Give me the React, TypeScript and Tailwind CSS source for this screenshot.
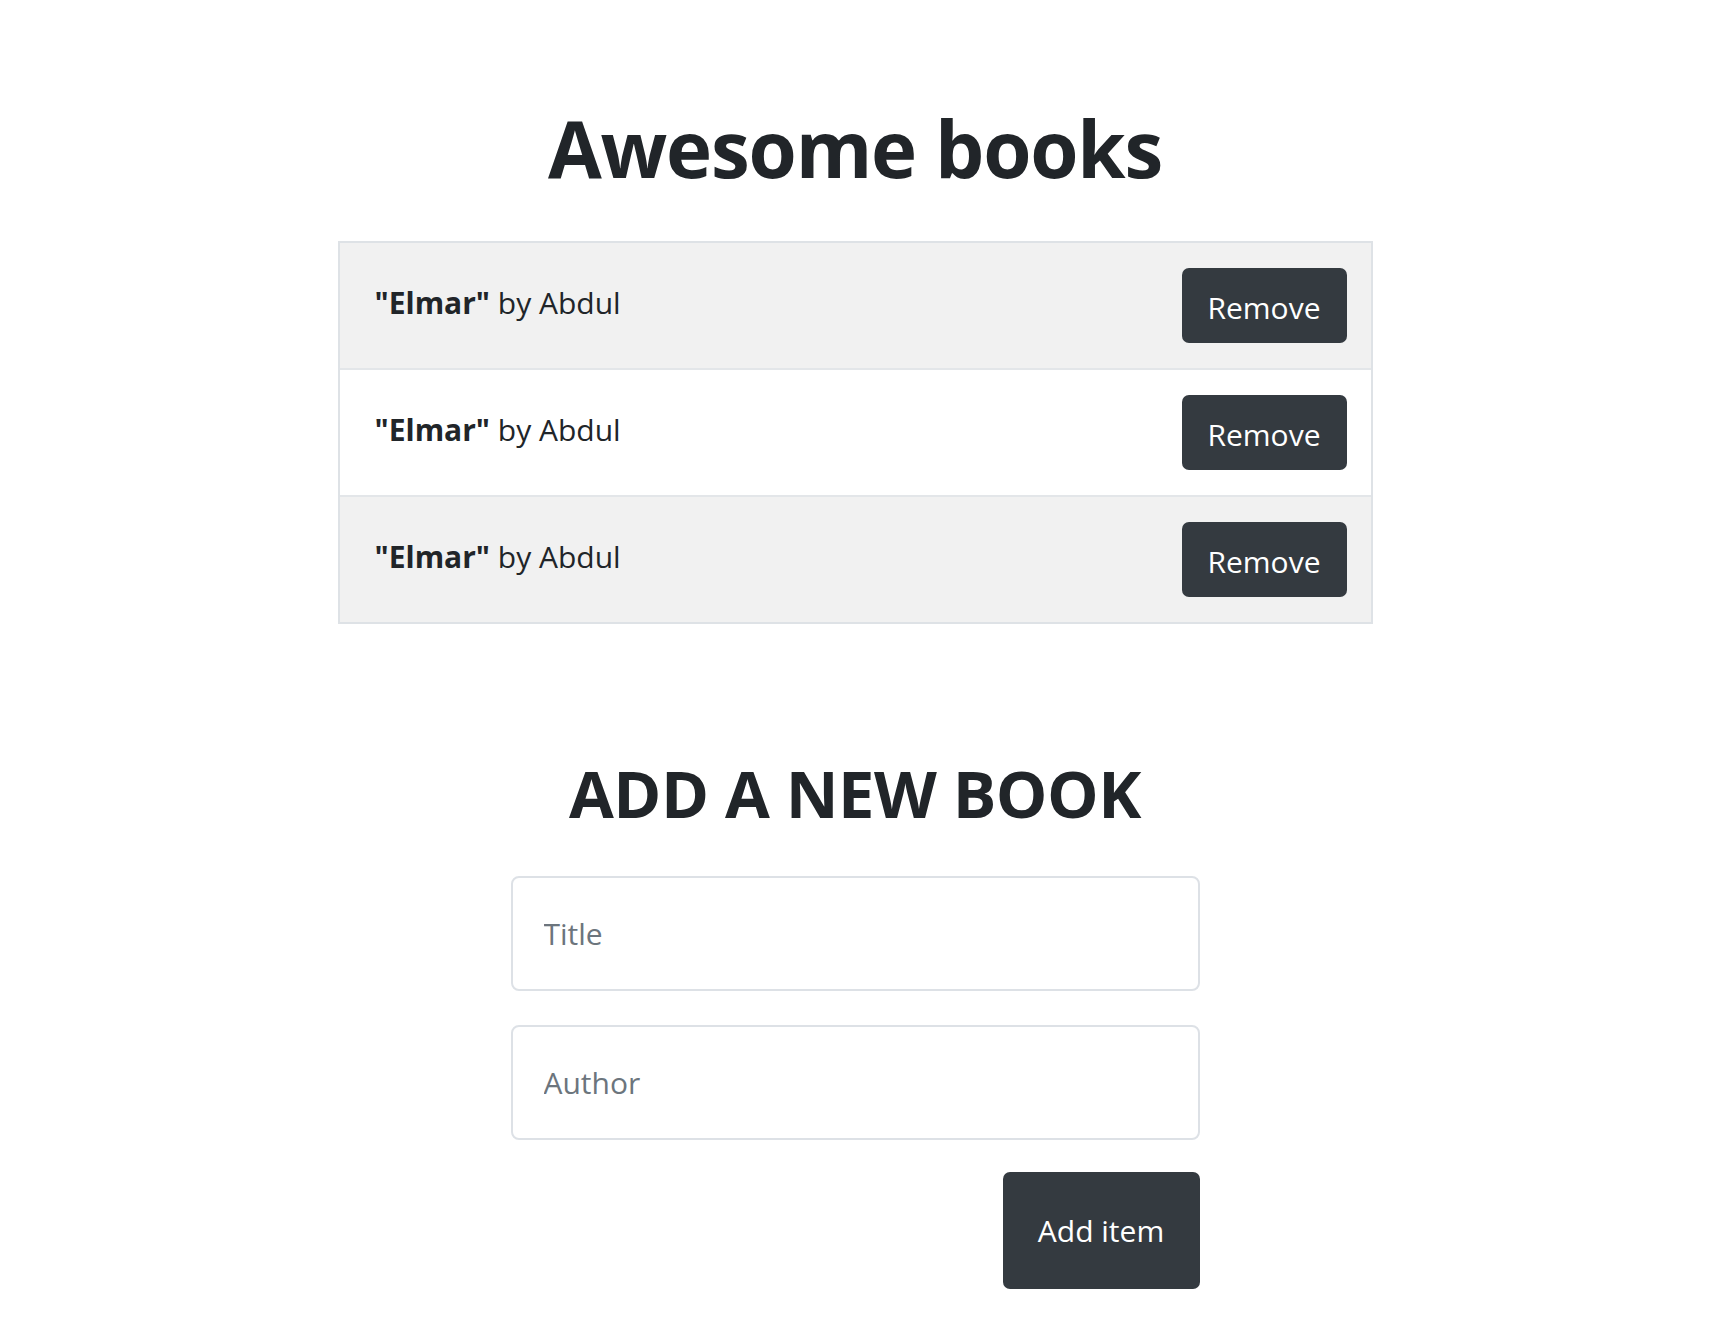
import { useState } from 'react';

type Book = {
  id: number;
  title: string;
  author: string;
};

const initialBooks: Book[] = [
  { id: 1, title: 'Elmar', author: 'Abdul' },
  { id: 2, title: 'Elmar', author: 'Abdul' },
  { id: 3, title: 'Elmar', author: 'Abdul' },
];

export default function App() {
  const [books, setBooks] = useState<Book[]>(initialBooks);
  const [title, setTitle] = useState('');
  const [author, setAuthor] = useState('');

  const removeBook = (id: number) => {
    setBooks((prev) => prev.filter((book) => book.id !== id));
  };

  const addBook = (e: React.FormEvent) => {
    e.preventDefault();
    if (!title.trim() || !author.trim()) return;
    setBooks((prev) => [...prev, { id: Date.now(), title, author }]);
    setTitle('');
    setAuthor('');
  };

  return (
    <div className="min-h-screen bg-white font-['Open_Sans',sans-serif] text-[#212529]">
      <h1 className="pt-[102px] text-center text-[78px] font-bold leading-[1.2] tracking-[-1.2px]">
        Awesome books
      </h1>

      <ul className="mx-auto mt-[45px] w-[1035px] border-2 border-[#dee2e6]">
        {books.map((book, index) => (
          <li
            key={book.id}
            className={`flex items-start justify-between py-[25px] pl-[35px] pr-6 ${
              index % 2 === 0 ? 'bg-[#f1f1f1]' : 'bg-white'
            } ${index < books.length - 1 ? 'border-b-2 border-[#e3e6e9]' : ''}`}
          >
            <p className="mt-[12px] text-[30px] leading-[1.5]">
              <span className="font-bold">"{book.title}"</span> by {book.author}
            </p>
            <button
              type="button"
              onClick={() => removeBook(book.id)}
              className="h-[75px] w-[165px] rounded-[7px] bg-[#343a40] pt-[5px] text-[30px] text-white"
            >
              Remove
            </button>
          </li>
        ))}
      </ul>

      <section className="mx-auto mt-[130px] w-[689px] pb-10">
        <h2 className="text-center text-[65px] font-bold leading-[1.2] tracking-[-0.5px]">
          ADD A NEW BOOK
        </h2>
        <form onSubmit={addBook} className="mt-[44px] flex flex-col">
          <input
            type="text"
            value={title}
            onChange={(e) => setTitle(e.target.value)}
            placeholder="Title"
            className="h-[115px] rounded-[8px] border-2 border-[#dde1e6] px-[31px] text-[30px] text-[#212529] outline-none placeholder:text-[#6c757d]"
          />
          <input
            type="text"
            value={author}
            onChange={(e) => setAuthor(e.target.value)}
            placeholder="Author"
            className="mt-[34px] h-[115px] rounded-[8px] border-2 border-[#dde1e6] px-[31px] text-[30px] text-[#212529] outline-none placeholder:text-[#6c757d]"
          />
          <button
            type="submit"
            className="mt-[32px] h-[117px] w-[197px] self-end rounded-[7px] bg-[#343a40] text-[30px] text-white"
          >
            Add item
          </button>
        </form>
      </section>
    </div>
  );
}
